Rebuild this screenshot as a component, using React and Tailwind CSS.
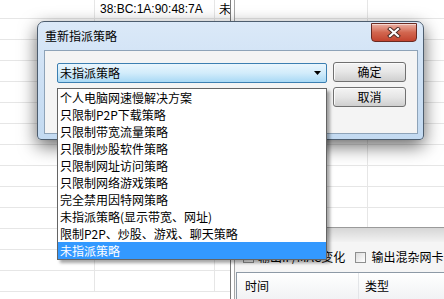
import React from 'react';

const cjk = { fontFamily: '"Noto Sans CJK SC", "Microsoft YaHei", sans-serif' };

const items = [
    '个人电脑网速慢解决方案',
    '只限制P2P下载策略',
    '只限制带宽流量策略',
    '只限制炒股软件策略',
    '只限制网址访问策略',
    '只限制网络游戏策略',
    '完全禁用因特网策略',
    '未指派策略(显示带宽、网址)',
    '限制P2P、炒股、游戏、聊天策略',
    '未指派策略',
];

const rowCount = 14;

const LeftGrid = () => (
    <div className="w-[230px] h-full flex flex-col overflow-hidden">
        {Array.from({ length: rowCount }).map((_, i) => (
            <div key={i} className={`flex shrink-0 border-b border-[#e6e6e6] ${i === 0 ? 'h-[19px]' : 'h-[21px]'}`}>
                <div className="w-[95px] border-r border-[#e6e6e6]" />
                <div className="w-[120px] border-r border-[#e6e6e6] pl-[5px] flex items-center text-[12px] text-black" style={{ fontFamily: '"Liberation Sans", Arial, sans-serif' }}>
                    {i === 0 ? '38:BC:1A:90:48:7A' : ''}
                </div>
                <div className="flex-1 pl-[4px] flex items-center text-[12px] text-black overflow-hidden" style={cjk}>
                    {i === 0 ? '未' : ''}
                </div>
            </div>
        ))}
    </div>
);

const RightSide = () => (
    <div className="flex-1 h-full flex flex-col">
        <div className="h-[235px] flex flex-col overflow-hidden">
            {Array.from({ length: 12 }).map((_, i) => (
                <div key={i} className={`flex shrink-0 border-b border-[#e6e6e6] ${i === 0 ? 'h-[19px]' : 'h-[21px]'}`}>
                    <div className="w-[133px] border-r border-[#e6e6e6]" />
                    <div className="flex-1" />
                </div>
            ))}
        </div>
        <div className="flex-1 flex flex-col border-t border-[#9a9a9a] bg-[#f5f5f5]">
            <div className="h-[14px] bg-gradient-to-b from-[#d6d6d6] to-[#f2f2f2]" />
            <div className="h-[30px] flex items-center pl-[8px] text-[12px] text-black" style={cjk}>
                <div className="w-[11px] h-[11px] border border-[#8e8f8f] bg-gradient-to-br from-[#dcdcdc] to-white" />
                <span className="ml-[4px]">输出IP/MAC变化</span>
                <div className="ml-[10px] w-[11px] h-[11px] border border-[#8e8f8f] bg-gradient-to-br from-[#dcdcdc] to-white" />
                <span className="ml-[5px] whitespace-nowrap">输出混杂网卡</span>
            </div>
            <div className="flex-1 ml-[1px] border-l border-t border-[#8e9aa6] bg-white">
                <div className="h-[26px] flex text-[12px] text-black bg-gradient-to-b from-white to-[#f1f2f4]" style={cjk}>
                    <div className="w-[122px] pl-[8px] flex items-center border-r border-[#e3e5e8]">时间</div>
                    <div className="flex-1 pl-[6px] flex items-center">类型</div>
                </div>
            </div>
        </div>
    </div>
);

const CloseButton = () => (
    <div className="absolute right-[6px] top-[1px] w-[46px] h-[19px] rounded-b-[4px] border border-[#6a2a22] bg-gradient-to-b from-[#eab0a4] via-[#d2664f] to-[#c2432e] flex items-center justify-center shadow-[inset_0_1px_0_rgba(255,255,255,0.5)]">
        <svg width="14" height="11" viewBox="0 0 14 11">
            <path d="M3 2 L11 9 M11 2 L3 9" stroke="#4a2a24" strokeWidth="4" strokeLinecap="square" />
            <path d="M3 2 L11 9 M11 2 L3 9" stroke="#ffffff" strokeWidth="2.2" strokeLinecap="square" />
        </svg>
    </div>
);

const Dialog = () => (
    <div className="absolute left-[37px] top-[21px] w-[387px] h-[119px] rounded-t-[7px] rounded-b-[4px] border border-[#4d5d6e] bg-gradient-to-b from-[#dbe9f8] via-[#cde0f4] to-[#c3daf1] shadow-[0_6px_18px_rgba(0,0,0,0.6)] flex flex-col pl-[6px] pr-[5px] pb-[5px]">
        <div className="h-[28px] flex items-center pl-[1px] text-[12px] text-black" style={cjk}>重新指派策略</div>
        <CloseButton />
        <div className="flex-1 border border-[#8ea3b8] bg-[#f4f4f4] flex items-start pt-[12px] pl-[12px] gap-[6px]" style={cjk}>
            <div className="w-[270px] h-[20px] rounded-[2px] border border-[#3c7fb1] bg-gradient-to-b from-[#eaf6fd] via-[#d2ecfb] to-[#a9d9f5] flex items-center pl-[2px] pr-[5px] text-[12px] text-black">
                <span className="flex-1">未指派策略</span>
                <svg width="7" height="4" viewBox="0 0 7 4"><path d="M0 0 H7 L3.5 4 Z" fill="#000" /></svg>
            </div>
            <div className="flex flex-col gap-[5px] -mt-[1px]">
                {['确定', '取消'].map((t) => (
                    <div key={t} className="w-[73px] h-[20px] rounded-[3px] border border-[#707070] bg-gradient-to-b from-[#f4f4f4] via-[#e6e6e6] to-[#cfcfcf] flex items-center justify-center text-[12px] text-black shadow-[inset_1px_1px_0_#fbfbfb]">
                        {t}
                    </div>
                ))}
            </div>
        </div>
    </div>
);

const DropList = () => (
    <div className="absolute left-[57px] top-[88px] w-[270px] border border-[#646464] bg-white shadow-[3px_3px_3px_rgba(0,0,0,0.35)] text-[12px]" style={cjk}>
        {items.map((t, i) => (
            <div key={i} className={`h-[17px] flex items-center pl-[2px] whitespace-nowrap ${i === items.length - 1 ? 'bg-[#3399ff] text-white' : 'text-black'}`}>
                {t}
            </div>
        ))}
    </div>
);

export default function App() {
    return (
        <div className="relative w-[444px] h-[299px] overflow-hidden bg-white">
            <div className="flex h-full">
                <LeftGrid />
                <div className="w-[5px] h-full border-l border-r border-l-[#7a7a7a] border-r-[#a6a6a6] bg-white" />
                <RightSide />
            </div>
            <Dialog />
            <DropList />
        </div>
    );
}
